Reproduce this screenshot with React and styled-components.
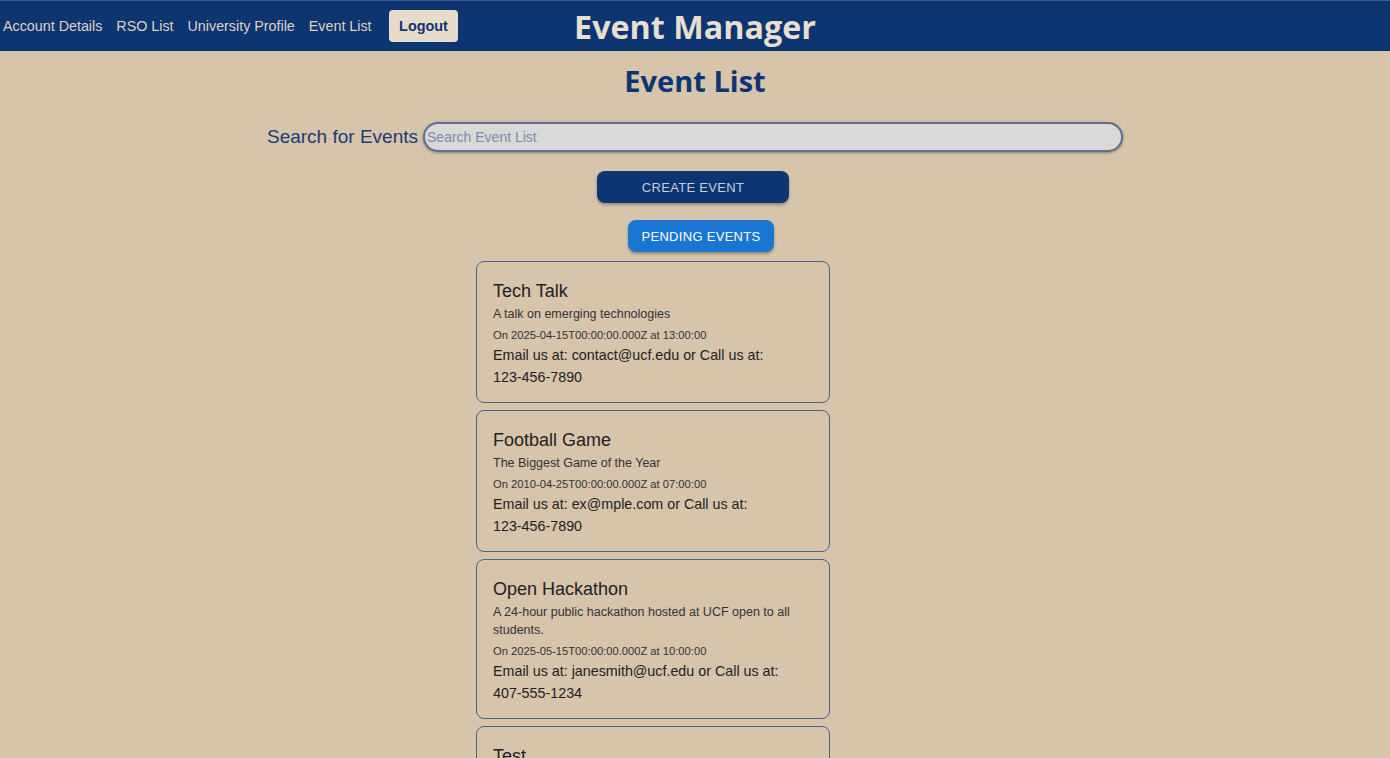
import React, { useState } from "react";
import styled, { createGlobalStyle } from "styled-components";

const GlobalStyle = createGlobalStyle`
  body {
    margin: 0;
    background: #d6c4ab;
    font-family: "Liberation Sans", Arial, sans-serif;
  }
`;

const Header = styled.header`
  display: grid;
  grid-template-columns: 1fr auto 1fr;
  align-items: center;
  height: 51px;
  background: #0c3572;
  border-top: 1px solid #3a5a8c;
  box-sizing: border-box;
`;

const Nav = styled.nav`
  display: flex;
  align-items: center;
  gap: 14px;
  padding-left: 3px;
`;

const NavLink = styled.a`
  color: #ddd2c2;
  font-size: 14.3px;
  text-decoration: none;
  cursor: pointer;
`;

const LogoutButton = styled.button`
  margin-left: 3px;
  border: none;
  border-radius: 4px;
  background: #e7dccc;
  color: #0c3572;
  font-family: inherit;
  font-size: 14.4px;
  font-weight: bold;
  height: 32px;
  padding: 0 10.5px;
  cursor: pointer;
`;

const SiteTitle = styled.div`
  color: #e8dfd1;
  font-size: 32.3px;
  font-weight: bold;
  font-family: "Open Sans", "Liberation Sans", sans-serif;
`;

const Main = styled.main`
  display: flex;
  flex-direction: column;
  align-items: center;
`;

const PageTitle = styled.h1`
  margin: 10px 0 0;
  color: #0c3572;
  font-size: 29px;
  font-family: "Open Sans", "Liberation Sans", sans-serif;
  font-weight: bold;
  line-height: 40px;
`;

const SearchRow = styled.label`
  display: flex;
  align-items: center;
  gap: 5px;
  margin-top: 21px;
  color: #1d3a72;
  font-size: 19px;
`;

const SearchInput = styled.input`
  width: 700px;
  height: 30px;
  box-sizing: border-box;
  border: 2px solid #5b6f93;
  border-radius: 15px;
  background: #d9d9d9;
  box-shadow: 0 1px 3px rgba(0, 0, 0, 0.35);
  padding: 0 2px;
  font-family: inherit;
  font-size: 14px;
  color: #222;
  outline: none;

  &::placeholder {
    color: #7d8cab;
  }
`;

const ActionButton = styled.button`
  height: 32px;
  border: none;
  border-radius: 8px;
  padding: 0 ${(p) => p.$pad}px;
  margin-top: ${(p) => p.$top}px;
  margin-left: ${(p) => p.$shift || 0}px;
  background: ${(p) => p.$bg};
  color: ${(p) => p.$fg};
  font-family: inherit;
  font-size: 13px;
  letter-spacing: 0.3px;
  text-transform: uppercase;
  box-shadow: 0 2px 3px rgba(0, 0, 0, 0.3);
  cursor: pointer;
`;

const CardList = styled.div`
  display: flex;
  flex-direction: column;
  gap: 7px;
  width: 438px;
  margin-top: 9px;
`;

const Card = styled.div`
  width: 354px;
  box-sizing: border-box;
  border: 1px solid #4a6391;
  border-radius: 8px;
  padding: 18px 16px 14px;
  color: #222;
`;

const CardTitle = styled.div`
  font-size: 18px;
  line-height: 22px;
`;

const CardDesc = styled.div`
  margin-top: 3px;
  font-size: 12.5px;
  line-height: 18px;
  color: #333;
`;

const CardDate = styled.div`
  margin-top: 3px;
  font-size: 11.2px;
  line-height: 18px;
  color: #333;
`;

const CardContact = styled.div`
  font-size: 14.3px;
  line-height: 22px;
`;

const Phone = styled.span`
  white-space: nowrap;
`;

const events = [
  {
    name: "Tech Talk",
    desc: "A talk on emerging technologies",
    date: "2025-04-15T00:00:00.000Z",
    time: "13:00:00",
    email: "contact@ucf.edu",
    phone: "123-456-7890",
  },
  {
    name: "Football Game",
    desc: "The Biggest Game of the Year",
    date: "2010-04-25T00:00:00.000Z",
    time: "07:00:00",
    email: "ex@mple.com",
    phone: "123-456-7890",
  },
  {
    name: "Open Hackathon",
    desc: "A 24-hour public hackathon hosted at UCF open to all students.",
    date: "2025-05-15T00:00:00.000Z",
    time: "10:00:00",
    email: "janesmith@ucf.edu",
    phone: "407-555-1234",
  },
  {
    name: "Test",
    desc: "Test event",
    date: "2025-06-01T00:00:00.000Z",
    time: "12:00:00",
    email: "test@ucf.edu",
    phone: "123-456-7890",
  },
];

const App = () => {
  const [search, setSearch] = useState("");

  const shown = events.filter((e) =>
    e.name.toLowerCase().includes(search.toLowerCase())
  );

  return (
    <>
      <GlobalStyle />
      <Header>
        <Nav>
          <NavLink>Account Details</NavLink>
          <NavLink>RSO List</NavLink>
          <NavLink>University Profile</NavLink>
          <NavLink>Event List</NavLink>
          <LogoutButton>Logout</LogoutButton>
        </Nav>
        <SiteTitle>Event Manager</SiteTitle>
        <div />
      </Header>
      <Main>
        <PageTitle>Event List</PageTitle>
        <SearchRow>
          Search for Events
          <SearchInput
            placeholder="Search Event List"
            value={search}
            onChange={(e) => setSearch(e.target.value)}
          />
        </SearchRow>
        <ActionButton $top={19} $pad={45} $shift={-4} $bg="#0c3572" $fg="#c9cdd8">
          Create Event
        </ActionButton>
        <ActionButton $top={17} $pad={13} $shift={12} $bg="#1976d2" $fg="#fff">
          Pending Events
        </ActionButton>
        <CardList>
          {shown.map((e) => (
            <Card key={e.name}>
              <CardTitle>{e.name}</CardTitle>
              <CardDesc>{e.desc}</CardDesc>
              <CardDate>
                On {e.date} at {e.time}
              </CardDate>
              <CardContact>
                Email us at: {e.email} or Call us at: <Phone>{e.phone}</Phone>
              </CardContact>
            </Card>
          ))}
        </CardList>
      </Main>
    </>
  );
};

export default App;
